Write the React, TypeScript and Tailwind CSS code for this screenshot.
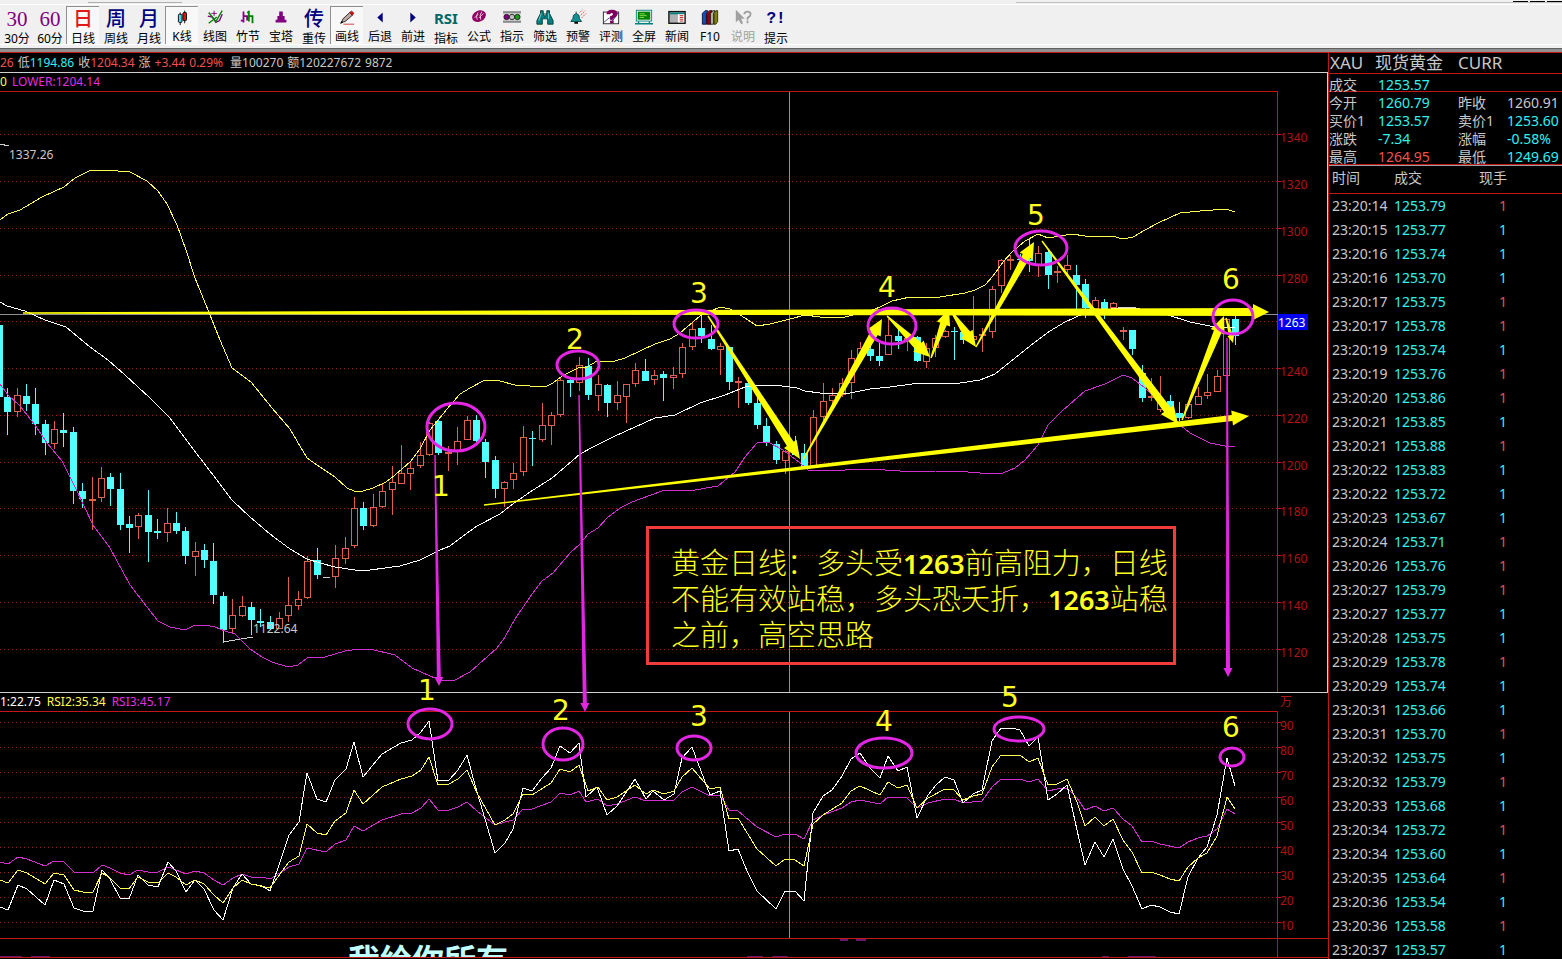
import React, { useState } from 'react';
import clsx from 'clsx';

type Point = [number, number];

// [x, high, low, bodyTop, bodyBottom, rising]
type Candle = [number, number, number, number, number, 0 | 1];

const candles: Candle[] = [
  [-1, 325, 397, 325, 397, 0], [7, 388, 435, 397, 412, 0], [17, 388, 417, 395, 412, 1], [26, 384, 411, 396, 404, 0],
  [35, 388, 435, 404, 424, 0], [45, 420, 455, 424, 443, 0], [54, 421, 449, 429, 444, 1], [63, 413, 447, 430, 433, 0],
  [73, 427, 504, 432, 491, 0], [82, 483, 508, 491, 499, 0], [92, 477, 530, 499, 500, 1], [101, 467, 502, 478, 498, 1],
  [110, 473, 506, 477, 489, 0], [120, 473, 530, 489, 525, 0], [129, 516, 553, 524, 528, 0], [138, 513, 539, 515, 527, 1],
  [148, 490, 562, 515, 532, 0], [157, 519, 539, 531, 533, 0], [167, 508, 542, 523, 533, 1], [176, 512, 534, 523, 531, 0],
  [185, 527, 564, 531, 556, 0], [195, 542, 576, 551, 557, 1], [204, 544, 568, 550, 560, 0], [213, 543, 604, 561, 595, 0],
  [223, 592, 643, 596, 630, 0], [232, 599, 633, 615, 629, 1], [242, 596, 617, 606, 616, 1], [251, 602, 635, 607, 620, 0],
  [260, 609, 627, 621, 623, 0], [270, 616, 630, 622, 629, 0], [279, 612, 629, 618, 629, 1], [288, 577, 622, 605, 616, 1],
  [298, 591, 610, 599, 606, 1], [307, 556, 599, 561, 598, 1], [317, 548, 579, 560, 575, 0], [335, 545, 588, 558, 577, 1],
  [345, 537, 564, 548, 559, 1], [354, 497, 548, 508, 546, 1], [363, 502, 530, 508, 526, 0], [373, 494, 527, 507, 526, 1],
  [382, 484, 508, 491, 507, 1], [392, 466, 515, 482, 490, 1], [401, 445, 484, 473, 484, 1], [410, 461, 490, 468, 474, 1],
  [420, 442, 468, 455, 466, 1], [429, 422, 456, 423, 455, 1], [438, 420, 455, 421, 453, 0], [448, 446, 471, 452, 453, 1],
  [457, 427, 465, 441, 452, 1], [467, 416, 440, 420, 440, 1], [476, 415, 443, 420, 441, 0], [485, 439, 478, 442, 462, 0],
  [495, 456, 498, 460, 489, 0], [504, 481, 507, 482, 489, 1], [513, 463, 489, 473, 480, 1], [523, 426, 476, 437, 472, 1],
  [532, 431, 466, 438, 439, 0], [542, 403, 442, 425, 440, 1], [551, 412, 445, 415, 426, 1], [560, 378, 417, 380, 415, 1],
  [570, 377, 397, 380, 383, 0], [579, 357, 391, 365, 383, 1], [588, 358, 400, 366, 395, 0], [598, 375, 411, 384, 396, 1],
  [607, 384, 417, 385, 403, 0], [617, 381, 410, 395, 403, 1], [626, 384, 423, 384, 397, 1], [635, 363, 387, 370, 384, 1],
  [645, 359, 381, 371, 381, 0], [654, 370, 385, 375, 380, 1], [663, 371, 401, 374, 378, 0], [673, 367, 389, 375, 378, 1],
  [682, 343, 378, 347, 374, 1], [692, 322, 350, 329, 347, 1], [701, 316, 343, 328, 336, 0], [711, 325, 350, 339, 349, 0],
  [720, 343, 375, 346, 350, 1], [729, 347, 390, 347, 382, 0], [738, 377, 408, 381, 382, 1], [748, 381, 405, 383, 403, 0],
  [757, 397, 429, 403, 425, 0], [766, 418, 446, 426, 443, 0], [776, 441, 464, 444, 460, 0], [785, 450, 474, 451, 461, 1],
  [795, 436, 456, 452, 455, 0], [804, 444, 468, 453, 467, 0], [813, 410, 468, 417, 466, 1], [823, 383, 420, 401, 417, 1],
  [832, 388, 410, 395, 401, 1], [842, 378, 397, 383, 395, 1], [851, 350, 399, 358, 383, 1], [860, 342, 360, 348, 358, 1],
  [870, 342, 361, 349, 356, 0], [879, 343, 366, 356, 361, 0], [888, 319, 355, 335, 355, 1], [898, 326, 349, 336, 341, 0],
  [907, 332, 351, 338, 341, 1], [917, 336, 362, 337, 361, 0], [926, 343, 368, 348, 362, 1], [935, 335, 357, 338, 348, 1],
  [945, 330, 338, 331, 337, 1], [954, 327, 360, 331, 332, 0], [963, 328, 344, 332, 340, 0], [973, 296, 342, 336, 340, 1],
  [982, 328, 352, 334, 335, 1], [992, 286, 338, 289, 332, 1], [1001, 259, 293, 260, 286, 1], [1010, 255, 270, 259, 260, 1],
  [1020, 254, 262, 259, 260, 0], [1029, 239, 272, 259, 261, 0], [1038, 246, 277, 253, 265, 1], [1048, 250, 289, 252, 275, 0],
  [1057, 266, 283, 271, 273, 1], [1067, 255, 276, 265, 270, 1], [1076, 265, 310, 275, 285, 0], [1085, 279, 318, 284, 308, 0],
  [1095, 297, 312, 300, 309, 1], [1104, 299, 319, 302, 309, 0], [1113, 302, 309, 303, 308, 1], [1123, 327, 340, 330, 331, 1],
  [1132, 330, 355, 330, 349, 0], [1142, 365, 402, 373, 398, 0], [1151, 378, 401, 396, 398, 1], [1160, 376, 412, 400, 410, 1],
  [1170, 395, 415, 401, 412, 0], [1179, 402, 421, 413, 418, 0], [1188, 403, 419, 404, 418, 1], [1198, 387, 405, 396, 405, 1],
  [1207, 374, 399, 392, 396, 1], [1217, 370, 392, 376, 392, 1], [1226, 318, 376, 319, 376, 1], [1235, 316, 345, 319, 336, 0],
];

const upperBand =
  '0,220 8,214 20,210 42,197 64,187 75,178 91,170 105,170 130,172 147,181 158,191 167,204 177,225 186,250 195,278 208,310 220,340 232,368 251,382 272,408 290,429 307,458 320,467 335,477 347,488 354,491 363,491 373,488 386,482 395,475 410,462 420,449 430,430 447,409 460,394 470,388 485,380 500,381 515,385 545,387 553,383 562,376 578,368 587,367 597,361 615,361 625,358 640,351 655,344 670,339 680,333 700,316 720,307 730,309 745,318 757,326 770,324 790,319 805,315 820,317 845,317 870,311 880,307 892,301 910,297 940,297 965,293 975,290 985,285 993,276 1003,262 1012,252 1025,241 1038,234 1048,238 1060,236 1072,234 1085,236 1112,236 1123,239 1133,237 1145,230 1160,222 1180,213 1200,211 1226,209 1235,212';

const middleBand =
  '0,302 7,306 25,311 45,320 66,327 90,347 108,360 125,375 150,398 170,418 190,445 210,471 232,500 250,517 270,534 290,549 307,559 320,563 335,567 355,570 370,570 400,566 420,560 440,550 450,546 463,536 477,526 500,514 510,506 530,492 552,478 565,467 580,454 595,446 615,436 635,427 655,418 675,415 700,403 725,395 745,387 757,385 775,385 797,388 805,391 820,393 850,393 870,389 890,387 920,383 945,384 960,383 980,380 995,374 1010,362 1030,346 1050,331 1065,322 1085,313 1118,308 1140,309 1165,314 1190,322 1215,327 1235,328';

const lowerBand =
  '0,384 8,395 20,406 35,425 47,443 62,461 75,487 93,525 110,548 130,585 147,607 158,621 170,627 185,630 195,625 205,625 215,627 225,631 235,634 250,649 262,657 272,662 288,667 298,665 307,658 325,657 345,651 352,650 370,649 395,655 412,668 430,676 440,680 455,680 470,672 497,648 505,637 515,619 530,597 542,581 553,573 570,553 580,544 588,534 598,528 607,518 620,508 632,502 640,499 662,491 695,490 718,486 735,472 745,457 757,443 768,442 783,450 800,463 808,470 845,470 870,469 900,471 935,471 968,472 980,473 1003,473 1015,468 1025,460 1038,445 1048,425 1062,411 1085,391 1105,384 1123,375 1132,378 1145,388 1155,397 1180,425 1190,433 1210,443 1225,446 1235,446';

const rsiFast =
  '0,907 8,910 18,885 27,889 45,905 54,880 64,884 74,908 83,911 93,911 102,870 110,879 120,898 129,899 138,875 148,885 158,887 168,862 176,871 186,892 195,880 204,889 214,910 223,920 233,888 242,874 251,884 262,886 270,891 280,862 289,835 299,822 307,773 317,799 326,802 335,780 346,769 354,742 363,777 382,754 401,743 412,740 421,732 429,721 438,781 449,780 458,770 467,755 475,785 495,853 505,843 513,829 523,788 532,791 542,778 551,768 560,746 570,753 579,743 586,797 597,787 607,815 617,806 635,779 646,799 653,791 664,800 674,794 682,758 692,747 710,795 720,791 729,851 738,849 747,871 757,891 776,909 785,891 795,891 804,901 813,813 823,796 832,790 842,776 851,759 860,753 870,768 880,778 888,756 898,771 907,767 917,818 928,795 936,785 945,777 954,780 963,803 973,794 982,790 992,741 1001,728 1012,728 1020,730 1029,746 1038,737 1048,800 1057,794 1067,785 1077,830 1085,865 1095,842 1104,857 1113,839 1123,869 1132,886 1142,909 1151,905 1160,907 1170,912 1179,914 1188,877 1198,858 1207,847 1217,815 1227,758 1235,786';

const rsiMid =
  '0,880 8,883 18,870 27,873 45,884 54,873 64,875 74,890 83,892 93,892 102,873 110,878 120,888 129,889 138,877 148,882 158,883 168,873 176,877 186,885 195,880 204,884 214,895 223,903 233,888 242,880 251,884 270,888 280,874 289,862 299,856 307,824 317,833 326,835 335,821 346,813 354,790 363,804 382,787 401,779 412,776 421,770 429,757 438,785 449,784 458,779 467,770 477,793 495,825 505,820 513,814 523,794 532,795 551,783 560,769 570,772 579,765 588,791 598,787 607,800 617,797 626,791 635,785 646,794 653,790 664,794 674,791 682,777 692,768 710,789 720,787 729,819 738,818 757,849 776,866 785,859 795,860 804,866 813,824 823,815 842,803 851,791 860,786 880,795 888,782 898,788 907,785 917,808 928,798 945,789 954,790 963,800 973,796 982,794 992,767 1001,755 1020,755 1029,762 1038,758 1048,785 1057,784 1067,779 1077,802 1085,826 1095,817 1104,826 1113,819 1123,840 1132,852 1142,873 1151,872 1160,875 1170,879 1179,881 1188,867 1198,858 1207,853 1217,836 1227,797 1235,809';

const rsiSlow =
  '0,862 8,864 18,857 27,859 45,866 54,861 64,862 74,872 93,873 102,865 110,868 120,873 129,875 138,870 148,872 158,872 168,867 176,870 186,874 195,871 204,873 214,880 223,885 233,878 242,874 251,877 262,877 270,879 280,873 289,867 299,864 307,848 326,852 335,844 346,840 354,826 363,831 382,820 401,814 412,813 421,808 429,799 438,810 449,810 458,807 467,802 477,811 495,825 505,822 513,820 523,809 532,809 551,802 560,793 570,795 579,791 586,802 598,799 607,806 617,804 635,797 646,801 674,800 682,792 692,787 710,796 720,795 729,810 738,811 757,827 776,837 785,834 795,834 804,839 813,820 823,815 842,808 851,802 860,800 880,804 888,797 907,798 917,808 928,803 945,799 954,799 963,803 982,801 992,787 1001,779 1020,779 1029,782 1038,779 1048,791 1057,789 1067,788 1077,798 1085,810 1095,806 1104,811 1113,808 1123,819 1132,826 1142,842 1151,841 1160,844 1179,848 1188,842 1198,838 1207,836 1217,829 1227,809 1235,814';

const priceGrid: [number, string][] = [
  [134, '1340'], [181, '1320'], [228, '1300'], [275, '1280'], [321, ''], [368, '1240'],
  [415, '1220'], [462, '1200'], [508, '1180'], [555, '1160'], [602, '1140'], [649, '1120'],
];

const rsiGrid = [90, 80, 70, 60, 50, 40, 30, 20, 10];

const quoteRows = [
  ['今开', '1260.79', '昨收', '1260.91'],
  ['买价1', '1253.57', '卖价1', '1253.60'],
  ['涨跌', '-7.34', '涨幅', '-0.58%'],
  ['最高', '1264.95', '最低', '1249.69'],
];

const ticks: [string, string, 'up' | 'down'][] = [
  ['23:20:14', '1253.79', 'up'], ['23:20:15', '1253.77', 'down'], ['23:20:16', '1253.74', 'down'],
  ['23:20:16', '1253.70', 'down'], ['23:20:17', '1253.75', 'up'], ['23:20:17', '1253.78', 'up'],
  ['23:20:19', '1253.74', 'down'], ['23:20:19', '1253.76', 'up'], ['23:20:20', '1253.86', 'up'],
  ['23:20:21', '1253.85', 'down'], ['23:20:21', '1253.88', 'up'], ['23:20:22', '1253.83', 'down'],
  ['23:20:22', '1253.72', 'down'], ['23:20:23', '1253.67', 'down'], ['23:20:24', '1253.71', 'up'],
  ['23:20:26', '1253.76', 'up'], ['23:20:27', '1253.79', 'up'], ['23:20:27', '1253.77', 'down'],
  ['23:20:28', '1253.75', 'down'], ['23:20:29', '1253.78', 'up'], ['23:20:29', '1253.74', 'down'],
  ['23:20:31', '1253.66', 'down'], ['23:20:31', '1253.70', 'up'], ['23:20:32', '1253.75', 'down'],
  ['23:20:32', '1253.79', 'up'], ['23:20:33', '1253.68', 'down'], ['23:20:34', '1253.72', 'up'],
  ['23:20:34', '1253.60', 'down'], ['23:20:35', '1253.64', 'up'], ['23:20:36', '1253.54', 'down'],
  ['23:20:36', '1253.58', 'up'], ['23:20:37', '1253.57', 'down'],
];

// ツールバーの文字アイコン
const glyph = (text: string, className: string) => (
  <span className={clsx('block h-5 whitespace-nowrap', className)}>{text}</span>
);

const serif = 'font-["Liberation_Serif",serif] text-[21px] leading-[22px] text-[#800080]';
const hanzi = 'font-["Noto_Sans_CJK_SC",sans-serif] text-[20px] leading-5 font-medium';

const Icon: React.FC<{ children: React.ReactNode }> = ({ children }) => (
  <svg viewBox="0 0 20 20" className="block h-5 w-5" aria-hidden="true">{children}</svg>
);

const tools: { label: string; icon: React.ReactNode; disabled?: boolean }[] = [
  { label: '30分', icon: glyph('30', serif) },
  { label: '60分', icon: glyph('60', serif) },
  { label: '日线', icon: glyph('日', `${hanzi} text-[#e01818]`) },
  { label: '周线', icon: glyph('周', `${hanzi} text-[#000080]`) },
  { label: '月线', icon: glyph('月', `${hanzi} text-[#000080]`) },
  {
    label: 'K线',
    icon: (
      <Icon>
        <path d="M8 5v14M13 3v14" stroke="#000" />
        <rect x="6" y="7" width="4" height="9" rx="1" fill="#40e0e8" stroke="#000" />
        <rect x="11" y="5" width="4" height="9" rx="1" fill="#e01010" stroke="#000" />
      </Icon>
    ),
  },
  {
    label: '线图',
    icon: (
      <Icon>
        <path d="M2 9l5 1 4 6 4-2 3-7" fill="none" stroke="#800080" strokeWidth="1.500" />
        <path d="M3 5l8 10 7-12M3 17l9-7" fill="none" stroke="#008000" strokeWidth="1.500" />
        <path d="M9 3v6M6 6h6" stroke="#800080" />
      </Icon>
    ),
  },
  {
    label: '竹节',
    icon: (
      <Icon>
        <path d="M5 4v12M2 14h3M5 9h4v5" fill="none" stroke="#800080" strokeWidth="2" />
        <path d="M11 3v12M9 5h2M11 9h4v8" fill="none" stroke="#008000" strokeWidth="2" />
      </Icon>
    ),
  },
  { label: '宝塔', icon: <Icon><path d="M8 4h4v5h2v4h2v3H4v-3h2V9h2z" fill="#800080" /></Icon> },
  { label: '重传', icon: glyph('传', `${hanzi} text-[#000080]`) },
  {
    label: '画线',
    icon: (
      <Icon>
        <path d="M6 18h12" stroke="#c04030" />
        <path d="M4 16l1.500-4L13 5l3 3-8 7z" fill="#b8a8a0" stroke="#222" />
        <path d="M13 5l2-1.500 2.500 2L16 8z" fill="#e01010" stroke="#901010" />
        <path d="M3 17l2-1-1-1z" fill="#000" stroke="#000" />
      </Icon>
    ),
  },
  { label: '后退', icon: <Icon><path d="M13 5v11l-6-5.500z" fill="#000080" /></Icon> },
  { label: '前进', icon: <Icon><path d="M7 5v11l6-5.500z" fill="#000080" /></Icon> },
  { label: '指标', icon: glyph('RSI', 'font-["Noto_Sans",sans-serif] text-[15px] leading-[21px] font-bold text-[#006868]') },
  {
    label: '公式',
    icon: (
      <Icon>
        <ellipse cx="10" cy="9" rx="8" ry="6" fill="#900060" transform="rotate(-25 10 9)" />
        <path d="M9 5q-3 4-1 8M13 4q-3 4-1 9M5 11l4-4M10 11l5-5" fill="none" stroke="#f0d8e8" />
      </Icon>
    ),
  },
  {
    label: '指示',
    icon: (
      <Icon>
        <path d="M0 4.500h20M0 15.500h20" stroke="#222" />
        <path d="M0 6.500h20M0 13.500h20" stroke="#aaa" />
        <circle cx="4" cy="10" r="3" fill="#800080" stroke="#222" />
        <circle cx="10" cy="10" r="3" fill="#c0c0c0" stroke="#222" />
        <circle cx="16" cy="10" r="3" fill="#18a018" stroke="#222" />
      </Icon>
    ),
  },
  {
    label: '筛选',
    icon: (
      <Icon>
        <path d="M5 3h3v3h1v3h2V6h1V3h3v3l4 8v4h-6v-6H7v6H1v-4l4-8z" fill="#008080" stroke="#103838" />
        <path d="M6 6l-3 8M14 6v6" stroke="#80d0d0" />
      </Icon>
    ),
  },
  {
    label: '预警',
    icon: (
      <Icon>
        <path d="M8 4v2M2 15q3-3 3-7l3-2 3 2q0 4 3 7z" fill="#109090" stroke="#104848" />
        <path d="M6 16.500h4" stroke="#000" strokeWidth="2" />
        <path d="M12 5l3-3M13 8l5-5M14 11l5-5" stroke="#e04040" strokeDasharray="2 1" />
      </Icon>
    ),
  },
  {
    label: '评测',
    icon: (
      <Icon>
        <rect x="1.500" y="4.500" width="17" height="13" fill="#fff" stroke="#222" />
        <path d="M2 16l6-5 4 3 6-9" fill="none" stroke="#4040a0" />
        <path d="M5 7q0-5 6-5t6 4q0 4-4 5v2H9V9q4-1 3-3-2-1-3 1z" fill="#800060" />
        <path d="M9 14h4v3H9z" fill="#800060" />
      </Icon>
    ),
  },
  {
    label: '全屏',
    icon: (
      <Icon>
        <rect x="1.500" y="2.500" width="17" height="12" fill="#fff" stroke="#008080" />
        <rect x="3" y="4" width="14" height="9" fill="#008000" />
        <path d="M5 6.500h6M5 8.500h8M5 10.500h5" stroke="#90e050" />
        <path d="M4 15v2M16 15v2M0 17.500h20" stroke="#008080" strokeWidth="1.500" />
      </Icon>
    ),
  },
  {
    label: '新闻',
    icon: (
      <Icon>
        <rect x="1" y="4" width="18" height="13" fill="#b0b0b0" stroke="#111" strokeWidth="1.500" />
        <path d="M2 6h16" stroke="#008080" strokeWidth="2" />
        <rect x="11" y="7" width="7" height="9" fill="#fff" />
        <path d="M13 8.500h4M13 10.500h4M13 12.500h4M13 14.500h4" stroke="#c01010" />
      </Icon>
    ),
  },
  {
    label: 'F10',
    icon: (
      <Icon>
        <path d="M1.500 6l3-3h3L6 6v12H1.500z" fill="#1050b0" stroke="#101040" />
        <path d="M6.500 6l3-3h3L11 6v12H6.500z" fill="#900010" stroke="#300000" />
        <path d="M10.500 6l3-3h2L14 6v12h-3.500z" fill="#b0b0a0" stroke="#222" />
        <path d="M14.500 6l2-3h2v12l-2 3h-2z" fill="#808000" stroke="#303000" />
      </Icon>
    ),
  },
  {
    label: '说明',
    disabled: true,
    icon: (
      <Icon>
        <path d="M2 2v14l3-3 3 5 2-1-2-5h4z" fill="#a0a0a0" />
        <path d="M11.500 7q0-3 3.500-3t3.500 3q0 2-3.500 4v2M15 14v3" fill="none" stroke="#a0a0a0" strokeWidth="2" />
      </Icon>
    ),
  },
  { label: '提示', icon: glyph('?!', 'font-["Liberation_Mono",monospace] text-[16px] leading-[22px] font-bold text-[#000080]') },
];

const Toolbar: React.FC = () => {
  const [pressed, setPressed] = useState(['日线', 'K线', '画线']);

  const toggle = (label: string) =>
    setPressed((prev) => (prev.includes(label) ? prev.filter((l) => l !== label) : [...prev, label]));

  return (
    <header className="flex-none bg-[#f0f0f0]">
      <div className="flex h-[5px] items-start justify-between border-b border-white">
        <div className="ml-[88px] h-[3px] w-[94px] border-b border-[#b0b0b0]" />
        <div className="flex h-[3px] w-[546px] items-start justify-end gap-[2px] border-b border-[#c0c0c0]">
          <span className="h-[2px] w-[15px] border-b border-black" />
          <span className="h-[2px] w-[15px] border-b border-black" />
          <span className="h-[2px] w-[15px] border-b border-black" />
        </div>
      </div>
      <nav className="flex h-10 border-b border-white pt-px">
        {tools.map((tool) => {
          const active = pressed.includes(tool.label);
          return (
            <button
              key={tool.label}
              type="button"
              disabled={tool.disabled}
              aria-pressed={active}
              onClick={() => toggle(tool.label)}
              className={clsx(
                'flex w-[33px] flex-none flex-col items-center gap-1 border-t border-l pt-px text-[12px] leading-[14px] whitespace-nowrap',
                active ? 'border-[#909090] bg-[#f8f8f8]' : 'border-transparent',
                tool.disabled ? 'text-[#a0a0a0]' : 'text-black',
              )}
            >
              {tool.icon}
              <span>{tool.label}</span>
            </button>
          );
        })}
      </nav>
      <div className="h-[7px] border-y-[3px] border-t-[#f0f0f0] border-b-[#909090] bg-[#606060]" />
    </header>
  );
};

const GridLine: React.FC<{ y: number }> = ({ y }) => (
  <path d={`M0 ${y + 0.5}H1277`} stroke="#a01818" strokeDasharray="1 3" />
);

const PriceChart: React.FC = () => (
  <svg viewBox="0 91 1320 601" preserveAspectRatio="xMinYMin meet" className="block h-[601px] w-full text-[12px]">
    <g shapeRendering="crispEdges" fill="none">
      {priceGrid.map(([y]) => <GridLine key={y} y={y} />)}
      <path d="M0 91.500H1277.500V692" stroke="#c01818" />
      {priceGrid.map(([y]) => <path key={y} d={`M1277 ${y + 0.5}h4`} stroke="#c01818" />)}
      <path d="M789.500 92V692M0 314.500H1278" stroke="#909090" />
      {candles.map(([x, high, low, top, bottom, rising]) =>
        rising ? (
          <g key={x} stroke="#e06050">
            <path d={`M${x + 0.5} ${high}V${top}M${x + 0.5} ${bottom}V${low}`} />
            <rect x={x - 2.5} y={top + 0.5} width="6" height={Math.max(bottom - top - 1, 0.5)} />
          </g>
        ) : (
          <g key={x}>
            <path d={`M${x + 0.5} ${high}V${low}`} stroke="#50ffff" />
            <rect x={x - 3} y={top} width="7" height={bottom - top} fill="#50ffff" />
          </g>
        ),
      )}
      <path d="M323 577.500h7M1118 307.500h18M223 642l30-5M0 144l9 2" stroke="#d0d0d0" />
      <polyline points={upperBand} stroke="#ffff50" />
      <polyline points={middleBand} stroke="#fff" />
      <polyline points={lowerBand} stroke="#d030d0" />
    </g>
    <g fill="#b01414">
      {priceGrid.map(([y, label]) => <text key={y} x="1280" y={y + 8}>{label}</text>)}
    </g>
    <g fill="#c8c8c8">
      <text x="9" y="159">1337.26</text>
      <text x="253" y="633">1122.64</text>
    </g>
    <rect x="1278" y="314" width="30" height="16" fill="#0000f0" />
    <text x="1278" y="327" fill="#fff">1263</text>
  </svg>
);

const RsiChart: React.FC = () => (
  <svg viewBox="0 711 1320 227" preserveAspectRatio="xMinYMin meet" className="block h-[227px] w-full text-[12px]">
    <g shapeRendering="crispEdges" fill="none">
      {rsiGrid.map((level, i) => <GridLine key={level} y={722 + i * 25} />)}
      {rsiGrid.map((level, i) => <path key={level} d={`M1277 ${722.5 + i * 25}h4`} stroke="#c01818" />)}
      <path d="M0 711.500H1277.500V938" stroke="#c01818" />
      <path d="M789.500 712V938" stroke="#909090" />
      <polyline points={rsiSlow} stroke="#d030d0" />
      <polyline points={rsiFast} stroke="#fff" />
      <polyline points={rsiMid} stroke="#ffff50" />
    </g>
    <g fill="#b01414">
      {rsiGrid.map((level, i) => <text key={level} x="1280" y={730 + i * 25}>{level}</text>)}
    </g>
  </svg>
);

// 始点が細く終点が太い矢印
interface ArrowProps {
  from: Point;
  to: Point;
  width: number;
  head: number;
  spread: number;
}

const Arrow: React.FC<ArrowProps> = ({ from, to, width, head, spread }) => {
  const [x1, y1] = from;
  const [x2, y2] = to;
  const length = Math.hypot(x2 - x1, y2 - y1);
  const ux = (x2 - x1) / length;
  const uy = (y2 - y1) / length;
  const bx = x2 - ux * head;
  const by = y2 - uy * head;
  const side = (x: number, y: number, d: number) => `${x - uy * d},${y + ux * d}`;
  const points = [
    side(x1, y1, 0.7),
    side(bx, by, width / 2),
    side(bx, by, spread / 2),
    `${x2},${y2}`,
    side(bx, by, -spread / 2),
    side(bx, by, -width / 2),
    side(x1, y1, -0.7),
  ];
  return <polygon points={points.join(' ')} />;
};

const yellowArrows: ArrowProps[] = [
  { from: [23, 313], to: [1269, 312], width: 8, head: 16, spread: 16 },
  { from: [484, 505], to: [1249, 416], width: 6, head: 17, spread: 15 },
  { from: [708, 316], to: [800, 459], width: 8, head: 18, spread: 15 },
  { from: [803, 460], to: [882, 319], width: 8, head: 16, spread: 15 },
  { from: [887, 316], to: [930, 357], width: 9, head: 16, spread: 15 },
  { from: [931, 358], to: [949, 309], width: 7, head: 16, spread: 14 },
  { from: [951, 311], to: [976, 347], width: 8, head: 16, spread: 14 },
  { from: [976, 347], to: [1034, 242], width: 8, head: 16, spread: 15 },
  { from: [1042, 241], to: [1178, 424], width: 8, head: 18, spread: 16 },
  { from: [1182, 420], to: [1224, 316], width: 8, head: 17, spread: 15 },
  { from: [1226, 318], to: [1233, 343], width: 4, head: 8, spread: 7 },
];

const magentaArrows: ArrowProps[] = [
  { from: [435, 455], to: [439, 686], width: 4, head: 9, spread: 9 },
  { from: [579, 395], to: [585, 712], width: 4, head: 9, spread: 9 },
  { from: [1227, 338], to: [1228, 677], width: 4, head: 9, spread: 9 },
];

const ellipses = [
  [456, 427, 29, 24], [578, 365, 21, 14], [696, 324, 22, 14], [892, 326, 24, 18], [1041, 248, 26, 17], [1233, 317, 20, 17],
  [430, 724, 22, 15], [563, 744, 20, 16], [694, 748, 17, 12], [884, 753, 28, 15], [1019, 729, 25, 12], [1232, 757, 12, 9],
];

const marks: [string, number, number][] = [
  ['1', 441, 496], ['2', 575, 349], ['3', 699, 303], ['4', 887, 297], ['5', 1036, 225], ['6', 1231, 289],
  ['1', 427, 700], ['2', 561, 720], ['3', 699, 726], ['4', 884, 731], ['5', 1010, 707], ['6', 1231, 737],
];

const Figure: React.FC = () => (
  <b className='font-["Noto_Sans",sans-serif] text-[27px] leading-none font-semibold'>1263</b>
);

const Annotations: React.FC = () => (
  <div className="pointer-events-none absolute inset-x-0 top-0">
    <svg viewBox="0 53 1320 906" preserveAspectRatio="xMinYMin meet" className="block h-[906px] w-full">
      <g fill="#ffff00">{yellowArrows.map((a) => <Arrow key={a.from.join()} {...a} />)}</g>
      <g fill="#e326e3">{magentaArrows.map((a) => <Arrow key={a.from.join()} {...a} />)}</g>
      <g fill="none" stroke="#e326e3" strokeWidth="3">
        {ellipses.map(([cx, cy, rx, ry]) => <ellipse key={`${cx}-${cy}`} cx={cx} cy={cy} rx={rx} ry={ry} />)}
      </g>
      <g className='font-["DejaVu_Sans",sans-serif] text-[28px]' fill="#ffff20" textAnchor="middle">
        {marks.map(([n, x, y]) => <text key={`${x}-${y}`} x={x} y={y}>{n}</text>)}
      </g>
    </svg>
    <p className='absolute top-[473px] left-[646px] w-[530px] border-[3px] border-[#f03c3c] px-[22px] pt-[14px] pb-[11px] font-["Noto_Sans_CJK_SC",sans-serif] text-[29px] leading-9 font-light whitespace-nowrap text-[#ffff20]'>
      黄金日线：多头受<Figure />前高阻力，日线
      <br />
      不能有效站稳，多头恐夭折，<Figure />站稳
      <br />
      之前，高空思路
    </p>
  </div>
);

const QuotePanel: React.FC = () => (
  <aside className="flex w-[234px] flex-none flex-col overflow-hidden border-l border-[#c01818] text-[14px] text-[#c8c8c8]">
    <h1 className="flex h-[22px] items-end gap-2 border-b border-[#c01818] pl-px text-[17px] leading-5 whitespace-nowrap">
      <span className="w-[37px]">XAU</span>
      <span className="w-[75px]">现货黄金</span>
      <span>CURR</span>
    </h1>
    <dl className="flex h-[18px] border-b border-[#c01818] leading-[22px]">
      <dt className="w-[49px]">成交</dt>
      <dd className="text-[#30f0f0]">1253.57</dd>
    </dl>
    <div className="border-b border-[#c01818]">
      {quoteRows.map(([label, value, label2, value2]) => (
        <dl key={label} className="grid h-[18px] grid-cols-[49px_80px_49px_1fr] leading-[22px]">
          <dt>{label}</dt>
          <dd className={label === '最高' ? 'text-[#f05050]' : 'text-[#30f0f0]'}>{value}</dd>
          <dt>{label2}</dt>
          <dd className={label2 === '昨收' ? '' : 'text-[#30f0f0]'}>{value2}</dd>
        </dl>
      ))}
    </div>
    <table className="w-full border-t border-[#a0a0a0] text-left">
      <thead>
        <tr className="h-7 border-b border-[#c01818]">
          <th className="w-[65px] pb-1 pl-[3px] font-normal">时间</th>
          <th className="w-[70px] pb-1 font-normal">成交</th>
          <th className="w-[43px] pb-1 text-right font-normal">现手</th>
          <th aria-hidden="true" />
        </tr>
      </thead>
      <tbody>
        {ticks.map(([time, price, dir], i) => (
          <tr key={i} className="h-6">
            <td className="pl-[3px]">{time}</td>
            <td className="text-[#30f0f0]">{price}</td>
            <td className={clsx('text-right', dir === 'up' ? 'text-[#f05050]' : 'text-[#30f0f0]')}>1</td>
            <td />
          </tr>
        ))}
      </tbody>
    </table>
  </aside>
);

export default function App() {
  return (
    <div className='flex h-screen flex-col overflow-hidden bg-black font-["Noto_Sans","Noto_Sans_CJK_SC",sans-serif]'>
      <Toolbar />
      <main className="flex min-h-0 flex-1 border-t border-[#c01818]">
        <section className="relative min-w-0 flex-1 overflow-hidden text-[12px] whitespace-nowrap">
          <div className="flex h-[19px] items-center gap-1 text-[#c8c8c8]">
            <span className="text-[#f05050]">26</span>
            <span>低<span className="text-[#30f0f0]">1194.86</span></span>
            <span>收<span className="text-[#f05050]">1204.34</span></span>
            <span>涨</span>
            <span className="text-[#f05050]">+3.44</span>
            <span className="pr-[3px] text-[#f05050]">0.29%</span>
            <span>量100270</span>
            <span>额120227672</span>
            <span>9872</span>
          </div>
          <div className="border-y border-r border-[#d0d0d0]">
            <div className="flex h-[18px] items-center gap-[5px]">
              <span className="text-[#ffff50]">0</span>
              <span className="text-[#e030e0]">LOWER:1204.14</span>
            </div>
            <PriceChart />
          </div>
          <div className="flex h-[18px] items-center gap-[6px]">
            <span className="text-white">1:22.75</span>
            <span className="text-[#ffff50]">RSI2:35.34</span>
            <span className="flex-1 text-[#e030e0]">RSI3:45.17</span>
            <span className="w-[48px] text-[#b01414]">万</span>
          </div>
          <RsiChart />
          <div className="relative h-5 overflow-hidden border-y border-[#c01818]">
            <svg viewBox="0 938 1320 20" preserveAspectRatio="xMinYMin meet" className="block h-5 w-full text-[12px]">
              <path d="M840 939h8M856 939h10M0 956h22M31 956h19M747 956h16M772 956h16M1102 956h7M1128 956h28" stroke="#d030d0" />
              <path d="M1277.500 938v20" stroke="#b01818" />
              <text x="1280" y="965" fill="#b01414">0</text>
              <text x="348" y="971" fill="#c0ffff" className='font-["Noto_Sans_CJK_SC",sans-serif] text-[32px] font-bold'>我给你所有</text>
            </svg>
          </div>
          <Annotations />
        </section>
        <QuotePanel />
      </main>
    </div>
  );
}
